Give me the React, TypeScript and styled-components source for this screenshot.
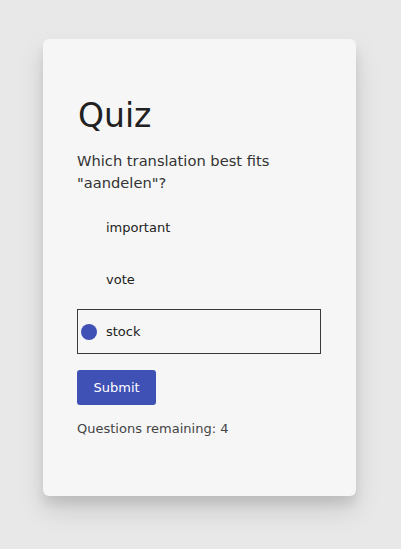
import React, { useState } from "react";
import styled, { createGlobalStyle } from "styled-components";

const GlobalStyle = createGlobalStyle`
  html, body {
    margin: 0;
    padding: 0;
    background: #e8e8e8;
    font-family: "DejaVu Sans", "Liberation Sans", sans-serif;
  }
`;

const Page = styled.div`
  display: flex;
  align-items: flex-start;
  padding: 39px 0 0 43px;
  min-height: 549px;
  box-sizing: border-box;
`;

const Card = styled.div`
  width: 313px;
  box-sizing: border-box;
  padding: 58px 35px 60px 34px;
  background: #f6f6f6;
  border-radius: 6px;
  box-shadow: 0 14px 26px rgba(0, 0, 0, 0.13), 0 8px 10px rgba(0, 0, 0, 0.08);
  display: flex;
  flex-direction: column;
  align-items: flex-start;
`;

const Title = styled.h1`
  margin: 0 0 0 1px;
  font-size: 33px;
  font-weight: 400;
  line-height: 37px;
  color: #212121;
`;

const Question = styled.p`
  margin: 16px 0 0;
  font-size: 14.67px;
  line-height: 22px;
  color: #333;
`;

const Options = styled.div`
  margin-top: 11px;
  display: flex;
  flex-direction: column;
  gap: 7px;
  align-self: stretch;
`;

const Option = styled.label<{ $selected: boolean }>`
  display: flex;
  align-items: center;
  gap: 9px;
  height: 45px;
  box-sizing: border-box;
  padding-left: 3px;
  border: 1px solid ${(p) => (p.$selected ? "#3a3a3a" : "transparent")};
  font-size: 13px;
  color: #222;
  cursor: pointer;
`;

const HiddenRadio = styled.input`
  position: absolute;
  opacity: 0;
  width: 0;
  height: 0;
  margin: 0;
`;

const Dot = styled.span<{ $checked: boolean }>`
  width: 16px;
  height: 16px;
  border-radius: 50%;
  background: ${(p) => (p.$checked ? "#3f51b5" : "transparent")};
  flex-shrink: 0;
`;

const SubmitButton = styled.button`
  margin-top: 16px;
  padding: 10px 16.5px;
  border: none;
  border-radius: 3px;
  background: #3f51b5;
  color: #fff;
  font-family: inherit;
  font-size: 13px;
  line-height: 15px;
  cursor: pointer;
`;

const Remaining = styled.p`
  margin: 16px 0 0;
  font-size: 13px;
  line-height: 15px;
  color: #444;
`;

const choices = ["important", "vote", "stock"];

export default function App() {
  const [selected, setSelected] = useState("stock");
  return (
    <>
      <GlobalStyle />
      <Page>
        <Card>
          <Title>Quiz</Title>
          <Question>Which translation best fits "aandelen"?</Question>
          <Options>
            {choices.map((c) => (
              <Option key={c} $selected={selected === c}>
                <HiddenRadio
                  type="radio"
                  name="answer"
                  value={c}
                  checked={selected === c}
                  onChange={() => setSelected(c)}
                />
                <Dot $checked={selected === c} />
                {c}
              </Option>
            ))}
          </Options>
          <SubmitButton>Submit</SubmitButton>
          <Remaining>Questions remaining: 4</Remaining>
        </Card>
      </Page>
    </>
  );
}
